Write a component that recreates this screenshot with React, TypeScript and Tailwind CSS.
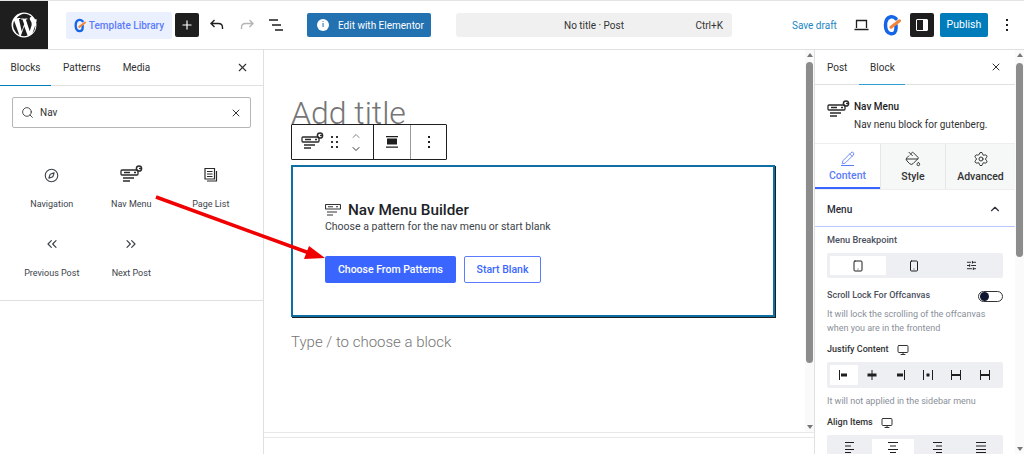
import {
  ChevronDown,
  ChevronUp,
  ChevronsLeft,
  ChevronsRight,
  Compass,
  Monitor,
  PaintBucket,
  Pencil,
  Plus,
  Search,
  Settings,
  SlidersHorizontal,
  Smartphone,
  Tablet,
  X,
} from "lucide-react";
import type { ReactNode } from "react";

function WpLogo() {
  return (
    <svg width="26" height="26" viewBox="0 0 24 24" fill="#fff">
      <path d="M12 0.5a11.5 11.5 0 1 0 0 23 11.5 11.5 0 0 0 0-23zm0 1.2c2.7 0 5.1 1 7 2.7-.9 0-1.7.8-1.7 1.7 0 .9.5 1.6 1 2.4.4.7.8 1.5.8 2.8 0 .9-.3 1.9-.8 3.2l-1 3.3-3.6-10.8c.6 0 1.1-.1 1.1-.1.5-.1.5-.9 0-.8 0 0-1.6.1-2.6.1-1 0-2.6-.1-2.6-.1-.5 0-.6.8 0 .8 0 0 .5.1 1 .1l1.5 4.2-2.2 6.5L7.3 6.5c.6 0 1.1-.1 1.1-.1.5-.1.5-.9 0-.8 0 0-1.6.1-2.6.1h-.6A10.3 10.3 0 0 1 12 1.700zM2.900 8l4.900 13.400A10.300 10.300 0 0 1 2.900 8zm9.300 5.100 3.100 8.500c0 .1 0 .1.100.1a10.300 10.300 0 0 1-6.300.2zm8.100-6.400a10.300 10.300 0 0 1-.5 13.200l3.100-9c.6-1.400.8-2.600.8-3.600 0-.2-.1-.4-.1-.6z" />
    </svg>
  );
}

function GLogo({ size = 18 }: { size?: number }) {
  return (
    <svg width={size} height={size * 1.25} viewBox="0 0 18 22" fill="none">
      <path d="M13 4.500C11.500 2.800 9.800 2.300 8 2.500 4.500 3 2.500 6.500 2.500 11c0 4.500 2 8 5.500 8.500 3 .3 5-1.500 5-5.500V11" stroke="#1565e8" strokeWidth="3.500" strokeLinecap="round" />
      <path d="M8 13 16.500 6.500" stroke="#f2853a" strokeWidth="3" strokeLinecap="round" />
    </svg>
  );
}

function NavMenuIcon() {
  return (
    <svg width="23" height="20" viewBox="0 0 23 20" fill="none" stroke="#2b2b2b" strokeWidth="1.300">
      <rect x="1" y="5" width="17" height="5" rx="1" />
      <path d="M4 7.500h6M14 7.500h2M3 13h11M3 16h7" />
      <circle cx="19" cy="3.500" r="2.600" strokeWidth="1.500" />
      <path d="M19 3.500h2.500" />
    </svg>
  );
}

function BlockItem({ icon, label }: { icon: ReactNode; label: string }) {
  return (
    <div className="flex h-[69px] w-[79.5px] flex-col items-center text-[#3c434a]">
      <div className="flex h-[24px] items-center justify-center">{icon}</div>
      <div className="mt-[10px] whitespace-nowrap text-[9px] leading-[14px]">{label}</div>
    </div>
  );
}

function AlignIcon({ left, bar }: { left: boolean; bar: string }) {
  return (
    <svg width="12" height="12" viewBox="0 0 12 12" fill="none" stroke="#1e1e1e">
      <path d={left ? "M1.500 1v10" : "M10.500 1v10"} strokeWidth="1" />
      <path d={bar} strokeWidth="3" />
    </svg>
  );
}

export default function App() {
  return (
    <div className="relative flex h-[454px] w-[1024px] flex-col overflow-hidden bg-white font-['Roboto','Noto_Sans',sans-serif] text-[#1e1e1e]">
      {/* Top bar */}
      <header className="flex h-[50px] shrink-0 items-center border-y border-[#e4e4e4] border-b-[#e0e0e0] pr-[13px]">
        <div className="flex h-[48px] w-[48px] items-center justify-center bg-[#1e1e1e]">
          <WpLogo />
        </div>
        <div className="ml-[18px] flex h-[27px] w-[106px] items-center justify-center gap-[3px] rounded-[2px] bg-[#ebf0ff] text-[10px] font-medium text-[#5c7cfa]">
          <GLogo size={12} />
          Template Library
        </div>
        <div className="ml-[3px] flex h-[24px] w-[24px] items-center justify-center rounded-[2px] bg-[#1e1e1e] text-white">
          <Plus size={14} strokeWidth={2} />
        </div>
        <svg className="ml-[10px]" width="16" height="14" viewBox="0 0 16 14" fill="none" stroke="#1e1e1e" strokeWidth="1.400">
          <path d="M5.500 2 2 5.500 5.500 9M2 5.500h7.500c2.500 0 4 1.500 4 4v1.500" />
        </svg>
        <svg className="ml-[14px]" width="16" height="14" viewBox="0 0 16 14" fill="none" stroke="#b5b5b5" strokeWidth="1.400">
          <path d="M10.500 2 14 5.500 10.500 9M14 5.500H6.500c-2.500 0-4 1.500-4 4v1.500" />
        </svg>
        <svg className="ml-[13px]" width="16" height="14" viewBox="0 0 16 14" fill="none" stroke="#1e1e1e" strokeWidth="1.500">
          <path d="M1 2h9M4 7h9M7 12h8" />
        </svg>
        <div className="ml-[23px] flex h-[24px] w-[124px] items-center gap-[9px] rounded-[2px] bg-[#2271b1] pl-[10px] text-[10px] text-white">
          <div className="flex h-[12px] w-[12px] shrink-0 items-center justify-center rounded-full bg-white text-[7px] font-bold text-[#2271b1]">
            i
          </div>
          <span className="whitespace-nowrap">Edit with Elementor</span>
        </div>
        <div className="relative ml-[25px] flex h-[24px] w-[276px] items-center justify-center rounded-[3px] bg-[#f0f0f0] text-[10px] text-[#333]">
          No title · Post
          <span className="absolute right-[9px]">Ctrl+K</span>
        </div>
        <span className="ml-[60px] whitespace-nowrap text-[10px] text-[#1a86c4]">Save draft</span>
        <svg className="ml-[17px]" width="15" height="12" viewBox="0 0 15 12" fill="none" stroke="#1e1e1e" strokeWidth="1.300">
          <path d="M2.500 9V1.500h10V9M0.500 10.500h14" />
        </svg>
        <div className="ml-[14px]">
          <GLogo size={18} />
        </div>
        <div className="ml-[9px] flex h-[24px] w-[24px] items-center justify-center rounded-[2px] bg-[#1e1e1e]">
          <div className="flex h-[12px] w-[12px] justify-end rounded-[1px] border border-white">
            <div className="h-full w-[4px] bg-white" />
          </div>
        </div>
        <div className="ml-[6px] flex h-[24px] w-[48px] items-center justify-center rounded-[2px] bg-[#007cba] text-[10.5px] text-white">
          Publish
        </div>
        <div className="ml-[18px] flex flex-col gap-[3px]">
          <div className="h-[2px] w-[2px] bg-[#1e1e1e]" />
          <div className="h-[2px] w-[2px] bg-[#1e1e1e]" />
          <div className="h-[2px] w-[2px] bg-[#1e1e1e]" />
        </div>
      </header>

      <div className="flex min-h-0 flex-1">
        {/* Block inserter */}
        <aside className="w-[264px] shrink-0 border-r border-[#e0e0e0]">
          <div className="flex h-[36px] items-center border-b border-[#e0e0e0] text-[10px] text-[#2f2f2f]">
            <div className="relative flex h-full w-[51px] items-center justify-center">
              Blocks
              <div className="absolute bottom-[-1px] left-0 h-[1.5px] w-full bg-[#007cba]" />
            </div>
            <span className="ml-[12px]">Patterns</span>
            <span className="ml-[22px]">Media</span>
            <X className="ml-auto mr-[14px]" size={13} strokeWidth={2} />
          </div>
          <div className="mx-[12px] mt-[11px] flex h-[31px] items-center rounded-[2px] border border-[#b5b5b5] pl-[8px] pr-[8px] text-[10px] text-[#333]">
            <Search size={13} strokeWidth={1.6} />
            <span className="ml-[6px]">Nav</span>
            <X className="ml-auto" size={12} strokeWidth={2} />
          </div>
          <div className="ml-[12px] mt-[35px] flex w-[240px] flex-wrap">
            <BlockItem icon={<Compass size={15} strokeWidth={1.8} />} label="Navigation" />
            <BlockItem icon={<NavMenuIcon />} label="Nav Menu" />
            <BlockItem
              icon={
                <svg width="16" height="16" viewBox="0 0 16 16" fill="none" stroke="#2b2b2b" strokeWidth="1.200">
                  <path d="M2 1.500h9.500v10.500H2zM4 4.500h5.500M4 7h5.500M4 9.500h5.500M13.500 4v10H4" />
                </svg>
              }
              label="Page List"
            />
            <BlockItem icon={<ChevronsLeft size={16} strokeWidth={1.8} />} label="Previous Post" />
            <BlockItem icon={<ChevronsRight size={16} strokeWidth={1.8} />} label="Next Post" />
          </div>
          <div className="mt-[-1px] border-t border-[#e0e0e0]" />
        </aside>

        {/* Editor canvas */}
        <main className="relative flex min-w-0 flex-1 flex-col">
          <div className="flex min-h-0 flex-1">
            <div className="min-w-0 flex-1 pl-[27px] pr-[29px]">
              <div className="h-[115px] pt-[38px]">
                <div className="relative h-[36px] text-[32px] font-light leading-[50px] text-[#757575]">
                  Add title
                </div>
                <div className="relative z-10 flex h-[36px] w-[156px] rounded-[1px] border border-[#1e1e1e] bg-white">
                  <div className="flex w-[82px] items-center border-r border-[#1e1e1e] pl-[9px]">
                    <NavMenuIcon />
                    <div className="ml-[7px] grid grid-cols-2 gap-x-[3px] gap-y-[3px]">
                      {[0, 1, 2, 3, 4, 5].map((dot) => (
                        <div key={dot} className="h-[2px] w-[2px] bg-[#333]" />
                      ))}
                    </div>
                    <div className="ml-[12px] flex flex-col items-center gap-[1px]">
                      <ChevronUp size={12} strokeWidth={1.6} className="text-[#666]" />
                      <ChevronDown size={12} strokeWidth={1.8} />
                    </div>
                  </div>
                  <div className="flex w-[37px] items-center justify-center border-r border-[#999]">
                    <svg width="12" height="12" viewBox="0 0 12 12" fill="#1e1e1e">
                      <path d="M0 0h12v1.200H0zM1 2.500h10v6H1zM0 10.500h12v1.200H0z" />
                    </svg>
                  </div>
                  <div className="flex flex-1 flex-col items-center justify-center gap-[3px]">
                    <div className="h-[2px] w-[2px] bg-[#1e1e1e]" />
                    <div className="h-[2px] w-[2px] bg-[#1e1e1e]" />
                    <div className="h-[2px] w-[2px] bg-[#1e1e1e]" />
                  </div>
                </div>
              </div>
              <div className="h-[152px] w-[484px] border-2 border-[#0f6ea3] pl-[32px] pt-[33px] shadow-[1px_1px_0_#1e1e1e]">
                <div className="flex items-center gap-[7px]">
                  <svg width="16" height="12" viewBox="0 0 16 12" fill="none" stroke="#333" strokeWidth="1.100">
                    <rect x="0.500" y="0.500" width="15" height="4.500" rx="0.800" />
                    <path d="M3 2.700h5M11 2.700h2M2 8h10M2 11h6" />
                  </svg>
                  <span className="text-[15.3px] font-medium leading-[20px] text-[#1d2327]">Nav Menu Builder</span>
                </div>
                <div className="text-[10.5px] leading-[14px] text-[#3c434a]">
                  Choose a pattern for the nav menu or start blank
                </div>
                <div className="mt-[22px] flex gap-[8px]">
                  <div className="flex h-[27px] w-[131px] items-center justify-center rounded-[2px] bg-[#3a66ff] text-[10.5px] font-medium text-white">
                    Choose From Patterns
                  </div>
                  <div className="flex h-[27px] w-[77px] items-center justify-center rounded-[2px] border border-[#5b7cff] text-[10.5px] font-medium text-[#3a66ff]">
                    Start Blank
                  </div>
                </div>
              </div>
              <div className="mt-[14px] text-[15px] font-light leading-[22px] text-[#757575]">
                Type / to choose a block
              </div>
            </div>
            <div className="relative w-[9px] shrink-0 bg-[#fafafa]">
              <div className="mx-auto mt-[12px] h-[301px] w-[7px] rounded-[4px] bg-[#8c8c8c]" />
              <div className="absolute left-[1.5px] top-[3px] h-0 w-0 border-x-[3px] border-b-[4px] border-x-transparent border-b-[#777]" />
              <div className="absolute bottom-[3px] left-[1.5px] h-0 w-0 border-x-[3px] border-t-[4px] border-x-transparent border-t-[#777]" />
            </div>
          </div>
          <div className="h-[22px] shrink-0 border-t border-[#e8e8e8]">
            <div className="mt-[4px] border-t border-[#e8e8e8]" />
          </div>
        </main>

        {/* Settings sidebar */}
        <aside className="flex w-[210px] shrink-0 border-l border-[#e0e0e0]">
          <div className="w-[200px] shrink-0">
            <div className="flex h-[35px] items-center border-b border-[#e0e0e0] text-[10px] text-[#2f2f2f]">
              <span className="ml-[12px]">Post</span>
              <div className="relative ml-[12px] flex h-full w-[46px] items-center justify-center">
                Block
                <div className="absolute bottom-[-1px] left-0 h-[1.5px] w-full bg-[#2d9fd0]" />
              </div>
              <X className="ml-auto mr-[13px]" size={12} strokeWidth={2} />
            </div>
            <div className="flex h-[58px] items-start pl-[12px] pt-[15px]">
              <div className="w-[27px]">
                <NavMenuIcon />
              </div>
              <div>
                <div className="text-[10px] font-medium leading-[14px] text-[#1e1e1e]">Nav Menu</div>
                <div className="mt-[4px] whitespace-nowrap text-[10px] leading-[14px] text-[#333]">
                  Nav nenu block for gutenberg.
                </div>
              </div>
            </div>
            <div className="flex h-[47px] border-y border-[#eeeeee] text-[10.5px] font-medium">
              <div className="flex w-[65px] flex-col items-center justify-center border-b-2 border-[#3a66ff] pt-[2px] text-[#5c7cfa]">
                <Pencil size={14} strokeWidth={1.5} />
                <div className="w-[13px] border-t border-[#5c7cfa]" />
                <span className="mt-[3px] leading-[14px]">Content</span>
              </div>
              <div className="flex w-[66px] flex-col items-center justify-center border-x border-[#e6e6e6] bg-[#f6f7f7] pt-[2px] text-[#333]">
                <PaintBucket size={16} strokeWidth={1.5} />
                <span className="mt-[3px] leading-[14px]">Style</span>
              </div>
              <div className="flex flex-1 flex-col items-center justify-center bg-[#f6f7f7] pt-[2px] text-[#333]">
                <Settings size={16} strokeWidth={1.5} />
                <span className="mt-[3px] leading-[14px]">Advanced</span>
              </div>
            </div>
            <div className="flex h-[37px] items-center justify-between border-b border-[#b8c8ff] px-[12px] pt-[2px] text-[10px] font-medium text-[#2b2d3a]">
              Menu
              <ChevronUp size={14} strokeWidth={2} className="mr-[1px]" />
            </div>
            <div className="px-[12px]">
              <div className="mt-[6px] text-[9.2px] font-medium leading-[14px] text-[#4a4f5c]">Menu Breakpoint</div>
              <div className="mt-[6px] flex h-[25px] items-center rounded-[2px] bg-[#eeeff2] px-[3px]">
                <div className="flex h-[19px] w-[56px] items-center justify-center rounded-[1px] bg-white">
                  <Tablet size={12} strokeWidth={2} />
                </div>
                <div className="flex w-[56px] justify-center">
                  <Smartphone size={12} strokeWidth={2} />
                </div>
                <div className="flex flex-1 justify-center">
                  <SlidersHorizontal size={11} strokeWidth={2} />
                </div>
              </div>
              <div className="mt-[11px] flex h-[14px] items-center justify-between text-[9px] font-medium text-[#4a4f5c]">
                Scroll Lock For Offcanvas
                <div className="flex h-[11px] w-[25px] items-center rounded-full border border-[#333] px-[1px]">
                  <div className="h-[9px] w-[9px] rounded-full bg-[#10162f]" />
                </div>
              </div>
              <div className="mt-[4px] w-[170px] text-[9px] leading-[14px] text-[#8a8f99]">
                It will lock the scrolling of the offcanvas when you are in the frontend
              </div>
              <div className="mt-[8px] flex h-[14px] items-center gap-[8px] text-[9px] font-medium text-[#333]">
                Justify Content
                <Monitor size={12} strokeWidth={2} />
              </div>
              <div className="mt-[5px] flex h-[26px] items-center rounded-[2px] bg-[#eeeff2] px-[3px]">
                <div className="flex h-[20px] w-[28px] items-center justify-center rounded-[1px] bg-white">
                  <AlignIcon left bar="M3 6h6" />
                </div>
                <div className="flex w-[28px] justify-center">
                  <svg width="12" height="12" viewBox="0 0 12 12" fill="none" stroke="#1e1e1e">
                    <path d="M6 1v10" />
                    <path d="M1.500 6h9" strokeWidth="3" />
                  </svg>
                </div>
                <div className="flex w-[28px] justify-center">
                  <AlignIcon left={false} bar="M3 6h6" />
                </div>
                <div className="flex w-[28px] justify-center">
                  <svg width="12" height="12" viewBox="0 0 12 12" fill="none" stroke="#1e1e1e">
                    <path d="M1.500 1v10M10.500 1v10" />
                    <path d="M4.500 6h3" strokeWidth="3" />
                  </svg>
                </div>
                <div className="flex w-[28px] justify-center">
                  <svg width="12" height="12" viewBox="0 0 12 12" fill="none" stroke="#1e1e1e">
                    <path d="M1.500 1v10M10.500 1v10" />
                    <path d="M1.500 6h9" strokeWidth="2" />
                  </svg>
                </div>
                <div className="flex flex-1 justify-center">
                  <svg width="12" height="12" viewBox="0 0 12 12" fill="none" stroke="#1e1e1e">
                    <path d="M1.500 1v10M10.500 1v10" />
                    <path d="M1.500 6h9" strokeWidth="2" />
                  </svg>
                </div>
              </div>
              <div className="mt-[6px] text-[9px] leading-[14px] text-[#8a8f99]">It will not applied in the sidebar menu</div>
              <div className="mt-[8px] flex h-[14px] items-center gap-[8px] text-[9px] font-medium text-[#333]">
                Align Items
                <Monitor size={12} strokeWidth={2} />
              </div>
              <div className="mt-[5px] flex h-[26px] items-start rounded-[2px] bg-[#eeeff2] pt-[4px]">
                <div className="flex w-[45px] justify-center pt-[2px]">
                  <svg width="12" height="12" viewBox="0 0 12 12" stroke="#1e1e1e"><path d="M1 1.500h9M1 5h6M1 8.500h9M1 11.500h6" /></svg>
                </div>
                <div className="flex h-[22px] w-[42px] justify-center bg-white pt-[2px]">
                  <svg width="12" height="12" viewBox="0 0 12 12" stroke="#1e1e1e"><path d="M1 1.500h10M3 5h6M1 8.500h10M3 11.500h6" /></svg>
                </div>
                <div className="flex w-[45px] justify-center pt-[2px]">
                  <svg width="12" height="12" viewBox="0 0 12 12" stroke="#1e1e1e"><path d="M2 1.500h9M5 5h6M2 8.500h9M5 11.500h6" /></svg>
                </div>
                <div className="flex flex-1 justify-center pt-[2px]">
                  <svg width="12" height="12" viewBox="0 0 12 12" stroke="#1e1e1e"><path d="M1 1.500h10M1 5h10M1 8.500h10M1 11.500h10" /></svg>
                </div>
              </div>
            </div>
          </div>
          <div className="relative flex-1 bg-[#fafafa]">
            <div className="mx-auto mt-[13px] h-[194px] w-[7px] rounded-[4px] bg-[#8c8c8c]" />
            <div className="absolute left-[1.5px] top-[3px] h-0 w-0 border-x-[3px] border-b-[4px] border-x-transparent border-b-[#777]" />
            <div className="absolute bottom-[3px] left-[1.5px] h-0 w-0 border-x-[3px] border-t-[4px] border-x-transparent border-t-[#777]" />
          </div>
        </aside>
      </div>

      {/* Annotation arrow */}
      <svg className="pointer-events-none absolute left-0 top-0 z-20" width="1024" height="454" fill="none">
        <path d="M156 197 312 254" stroke="#f00000" strokeWidth="3.5" />
        <path d="M325 258 304 259 309 246z" fill="#f00000" />
      </svg>
    </div>
  );
}
